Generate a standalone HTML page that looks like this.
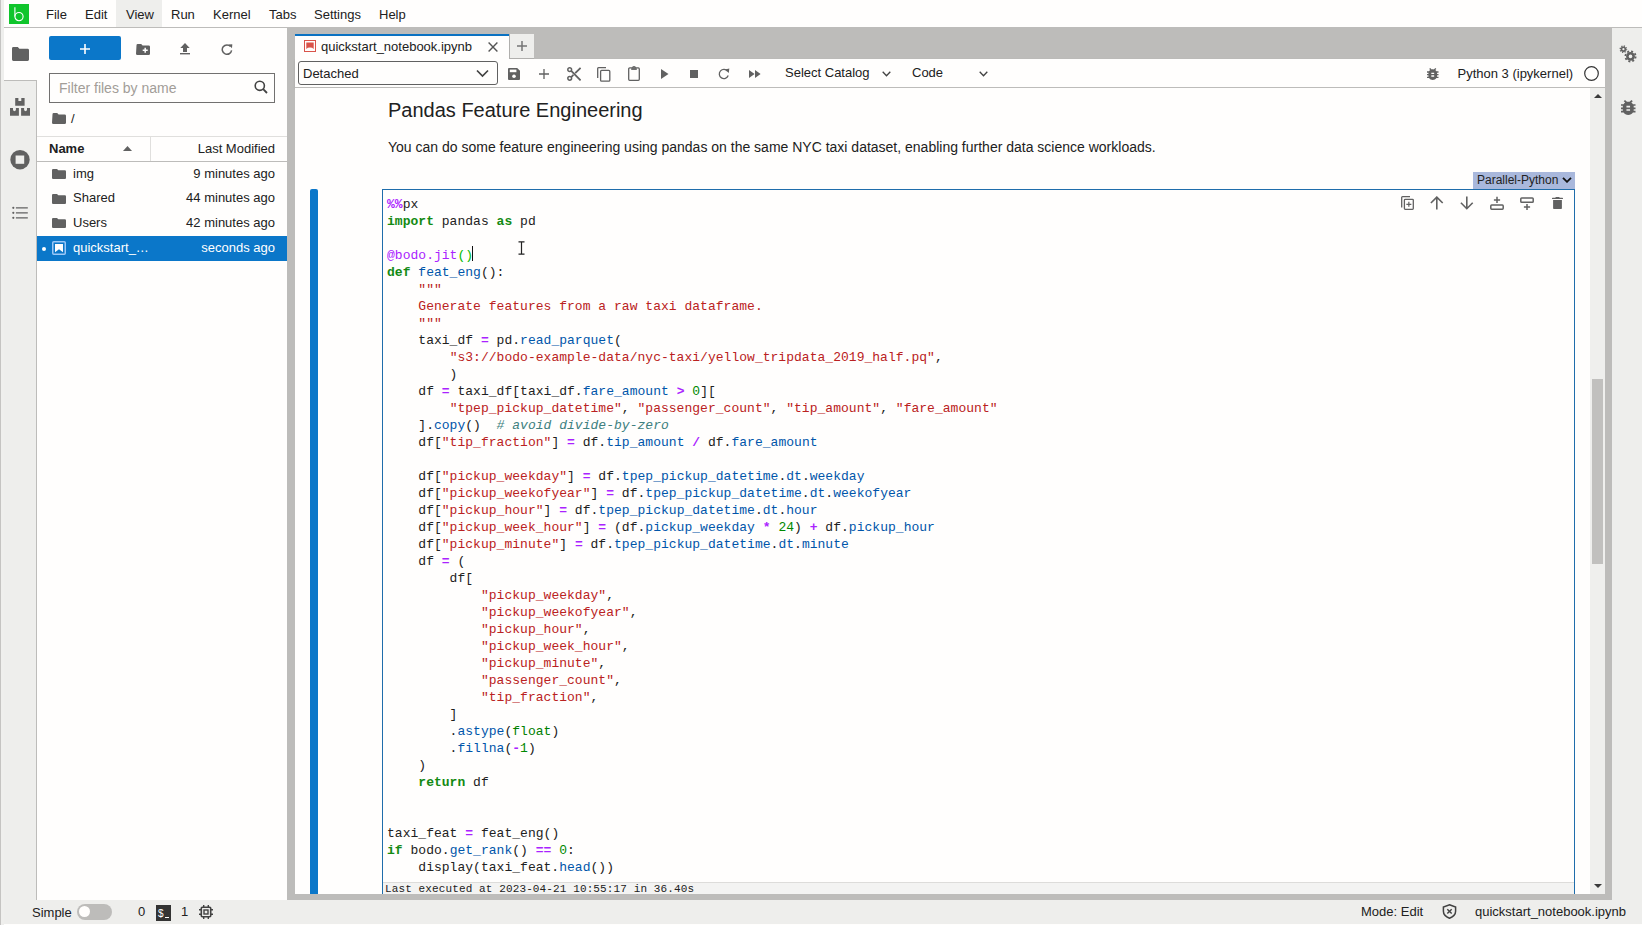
<!DOCTYPE html>
<html><head><meta charset="utf-8">
<style>
*{box-sizing:border-box;margin:0;padding:0}
html,body{width:1642px;height:925px;overflow:hidden;background:#eeeeec;font-family:"Liberation Sans",sans-serif;color:#212121}
.a{position:absolute}
.ui{font-size:13px;line-height:15px;white-space:pre}
svg{display:block}
/* menu */
#menubar{left:4px;top:0;width:1638px;height:28px;background:#fffefd;border-bottom:1px solid #bdbcba}
.mi{position:absolute;top:7px;font-size:13px;line-height:15px;color:#212121}
/* left stripe */
#lstripe{left:0;top:0;width:4px;height:925px;background:#efefed;border-left:1px solid #c5c4c2}
/* left icon bar */
#lbar{left:4px;top:28px;width:33px;height:872px;background:#eeeeec;border-right:1px solid #bdbcba}
#lbar .act{position:absolute;left:0;top:0;width:33px;height:52px;background:#fffefd}
/* file browser */
#fb{left:37px;top:28px;width:250px;height:872px;background:#fffefd}
#split{left:287px;top:28px;width:8px;height:872px;background:#bdbcba}
/* main */
#main{left:295px;top:28px;width:1310px;height:872px;background:#bdbcba}
#rsplit{left:1605px;top:28px;width:7px;height:872px;background:#bdbcba}
#rbar{left:1612px;top:28px;width:30px;height:872px;background:#eeeeec}
#status{left:0;top:900px;width:1642px;height:24px;background:#eeeeec}
#sbot{left:0;top:924px;width:1642px;height:1px;background:#fffefd}
.code{font-family:"Liberation Mono",monospace;font-size:13px;line-height:17px;white-space:pre;color:#212121;letter-spacing:0.026px}
.k{color:#138a13;font-weight:bold}
.s{color:#ba2121}
.o{color:#aa22ff;font-weight:bold}
.p{color:#0055aa}
.n{color:#008800}
.c{color:#408080;font-style:italic}
.m{color:#aa22ff}
.bi{color:#008000}
.g{color:#00bb00}
</style></head><body>
<div id="menubar" class="a">
  <div class="a" style="left:5px;top:4px;width:20px;height:20px;background:#10c52c"></div><svg class="a" style="left:5px;top:4px" width="20" height="20" viewBox="0 0 20 20"><path d="M5.9 3.2V12.5" stroke="#fff" stroke-width="1.1" fill="none"/><ellipse cx="10" cy="12.6" rx="4.1" ry="4.1" stroke="#fff" stroke-width="1.1" fill="none"/></svg>
  <div class="a" style="left:112px;top:0;width:46px;height:27px;background:#eeeeec"></div>
  <span class="mi" style="left:42px">File</span>
  <span class="mi" style="left:81px">Edit</span>
  <span class="mi" style="left:122px">View</span>
  <span class="mi" style="left:167px">Run</span>
  <span class="mi" style="left:209px">Kernel</span>
  <span class="mi" style="left:265px">Tabs</span>
  <span class="mi" style="left:310px">Settings</span>
  <span class="mi" style="left:375px">Help</span>
</div>
<div id="lbar" class="a"><div class="act"></div>
  <div class="a" style="left:0;top:52px;width:33px;height:1px;background:#bdbcba"></div>
  <svg class="a" style="left:7.5px;top:19px" width="17" height="14" viewBox="0 0 17 14"><path d="M0 1.4Q0 0 1.4 0H5.8L7.4 1.8H15.6Q17 1.8 17 3.2V12.6Q17 14 15.6 14H1.4Q0 14 0 12.6Z" fill="#616161"/></svg>
  <svg class="a" style="left:6px;top:70px" width="20" height="18" viewBox="0 0 20 18"><path d="M5.2 0.1H8.4V3.1H11.3V0.1H14.6V7.7H5.2Z" fill="#616161"/><path d="M0 10H3V12.2L4.45 13.3L5.9 12.2V10H8.9V17.8H0Z" fill="#616161"/><path d="M11.1 10H14.1V12.2L15.55 13.3L17 12.2V10H20V17.8H11.1Z" fill="#616161"/></svg>
  <svg class="a" style="left:6px;top:122px" width="20" height="20" viewBox="0 0 20 20"><circle cx="10" cy="9.7" r="9.7" fill="#616161"/><rect x="5.6" y="5.5" width="8.6" height="8.3" fill="#eeeeec"/></svg>
  <svg class="a" style="left:8px;top:178px" width="16" height="13" viewBox="0 0 16 13"><circle cx="1.3" cy="1.8" r="1.1" fill="#616161"/><circle cx="1.3" cy="6.8" r="1.1" fill="#616161"/><circle cx="1.3" cy="11.8" r="1.1" fill="#616161"/><path d="M3.9 1.8H15.8M3.9 6.8H15.8M3.9 11.8H15.8" stroke="#616161" stroke-width="1.3"/></svg>
</div>
<div id="fb" class="a">
  <!-- new launcher button -->
  <div class="a" style="left:12px;top:8px;width:72px;height:24px;background:#0b77c9;border-radius:2px"></div>
  <svg class="a" style="left:42px;top:15px" width="12" height="12" viewBox="0 0 12 12"><path d="M6 1v10M1 6h10" stroke="#fff" stroke-width="1.6"/></svg>
  <!-- new folder -->
  <svg class="a" style="left:99px;top:15.5px" width="14" height="11" viewBox="0 0 14 11"><path d="M0.5 1.2Q0.5 0 1.7 0H5.2L6.6 1.4H12.6Q14 1.4 14 2.7V9.7Q14 11 12.6 11H1.4Q0 11 0 9.7Z" fill="#616161"/><path d="M9.2 3.8v5M6.7 6.3h5" stroke="#fff" stroke-width="1.5"/></svg>
  <!-- upload -->
  <svg class="a" style="left:143px;top:15px" width="10" height="12" viewBox="0 0 10 12"><path d="M5 0L0.3 5H3V9H7V5H9.7Z" fill="#616161"/><rect x="0" y="10" width="10" height="1.4" fill="#616161"/></svg>
  <!-- refresh -->
  <svg class="a" style="left:184px;top:16px" width="12" height="11" viewBox="0 0 12 11"><path d="M9.6 2.6A4.7 4.7 0 1 0 10.6 6.4" fill="none" stroke="#616161" stroke-width="1.5"/><path d="M7.4 0.6L11.3 0.2L11 4.2Z" fill="#616161"/></svg>
  <!-- filter input -->
  <div class="a" style="left:12px;top:45px;width:226px;height:30px;border:1px solid #727170;background:#fffefd"></div>
  <span class="a" style="left:22px;top:52px;font-size:14px;line-height:16px;color:#a29d98">Filter files by name</span>
  <svg class="a" style="left:217px;top:52px" width="14" height="14" viewBox="0 0 14 14"><circle cx="5.8" cy="5.8" r="4.6" fill="none" stroke="#424242" stroke-width="1.6"/><path d="M9.2 9.2L13 13" stroke="#424242" stroke-width="1.8"/></svg>
  <!-- breadcrumb -->
  <svg class="a" style="left:15px;top:85px" width="14" height="11" viewBox="0 0 14 11"><path d="M0.5 1.2Q0.5 0 1.7 0H5.2L6.6 1.4H12.6Q14 1.4 14 2.7V9.7Q14 11 12.6 11H1.4Q0 11 0 9.7Z" fill="#616161"/></svg>
  <span class="a ui" style="left:34px;top:83px">/</span>
  <!-- header -->
  <div class="a" style="left:0;top:108px;width:250px;height:26px;border-top:1px solid #e0dfdd;border-bottom:1px solid #bdbcba"></div>
  <div class="a" style="left:113px;top:109px;width:1px;height:24px;background:#e0dfdd"></div>
  <span class="a ui" style="left:12px;top:113px;font-weight:bold">Name</span>
  <svg class="a" style="left:86px;top:118px" width="9" height="5" viewBox="0 0 9 5"><path d="M0 5L4.5 0L9 5Z" fill="#616161"/></svg>
  <span class="a ui" style="right:12px;top:113px">Last Modified</span>
  <!-- rows -->
  <svg class="a" style="left:15px;top:141px" width="14" height="10" viewBox="0 0 14 10"><path d="M0 1.1Q0 0 1.1 0H5L6.3 1.3H12.9Q14 1.3 14 2.4V8.9Q14 10 12.9 10H1.1Q0 10 0 8.9Z" fill="#616161"/></svg>
<span class="a ui" style="left:36px;top:138px">img</span><span class="a ui" style="right:12px;top:138px">9 minutes ago</span>
<svg class="a" style="left:15px;top:166px" width="14" height="10" viewBox="0 0 14 10"><path d="M0 1.1Q0 0 1.1 0H5L6.3 1.3H12.9Q14 1.3 14 2.4V8.9Q14 10 12.9 10H1.1Q0 10 0 8.9Z" fill="#616161"/></svg>
<span class="a ui" style="left:36px;top:162px">Shared</span><span class="a ui" style="right:12px;top:162px">44 minutes ago</span>
<svg class="a" style="left:15px;top:190px" width="14" height="10" viewBox="0 0 14 10"><path d="M0 1.1Q0 0 1.1 0H5L6.3 1.3H12.9Q14 1.3 14 2.4V8.9Q14 10 12.9 10H1.1Q0 10 0 8.9Z" fill="#616161"/></svg>
<span class="a ui" style="left:36px;top:187px">Users</span><span class="a ui" style="right:12px;top:187px">42 minutes ago</span>
<div class="a" style="left:0;top:208px;width:250px;height:25px;background:#0b77c9"></div>
<div class="a" style="left:5px;top:219px;width:4px;height:4px;border-radius:2px;background:#fff"></div>
<svg class="a" style="left:15px;top:213px" width="14" height="14" viewBox="0 0 14 14"><rect x="0.75" y="0.75" width="12.5" height="12.5" rx="1" fill="none" stroke="#9cc8f7" stroke-width="1.5"/><path d="M3 3H11V11.3L7 8.2L3 11.3Z" fill="#fffefd"/></svg>
<span class="a ui" style="left:36px;top:212px;color:#fff">quickstart_…</span><span class="a ui" style="right:12px;top:212px;color:#fff">seconds ago</span>

</div>
<div id="split" class="a"></div>
<div id="main" class="a"></div>
<!-- tab bar -->
<!-- toolbar -->
<div class="a" style="left:295px;top:59px;width:1310px;height:29px;background:#fffefd;border-bottom:1px solid #bdbcba;box-shadow:0 1px 2px rgba(0,0,0,0.12)"></div>
<div class="a" style="left:295px;top:34px;width:214px;height:25px;background:#fffefd;border-top:2px solid #0b72c2"></div>
<svg class="a" style="left:304px;top:40px" width="12" height="12" viewBox="0 0 12 12"><rect x="0.5" y="0.5" width="11" height="11" fill="#fffefd" stroke="#d9534a" stroke-width="1"/><path d="M2.3 2.4H9.7V8.9Q8.4 7.5 6 7.5Q3.6 7.5 2.3 8.9Z" fill="#d9534a"/></svg>
<span class="a ui" style="left:321px;top:39px">quickstart_notebook.ipynb</span>
<svg class="a" style="left:488px;top:42px" width="10" height="10" viewBox="0 0 10 10"><path d="M0.6 0.6L9.4 9.4M9.4 0.6L0.6 9.4" stroke="#555" stroke-width="1.4"/></svg>
<div class="a" style="left:509px;top:34px;width:25px;height:25px;background:#eeeeec;border-left:1px solid #b0afad;border-bottom:1px solid #b0afad"></div>
<svg class="a" style="left:517px;top:41px" width="10" height="10" viewBox="0 0 10 10"><path d="M5 0V10M0 5H10" stroke="#757575" stroke-width="1.5"/></svg>
<div class="a" style="left:298px;top:61px;width:200px;height:24px;border:1px solid #616161;border-radius:3px"></div>
<span class="a ui" style="left:303px;top:66px">Detached</span>
<svg class="a" style="left:476px;top:69px" width="13" height="9" viewBox="0 0 13 9"><path d="M1 1.5L6.5 7L12 1.5" fill="none" stroke="#424242" stroke-width="1.7"/></svg>
<!-- save -->
<svg class="a" style="left:508px;top:68px" width="12" height="12" viewBox="0 0 12 12"><path d="M0 1Q0 0 1 0H9.2L12 2.8V11Q12 12 11 12H1Q0 12 0 11Z" fill="#616161"/><rect x="1.8" y="1.6" width="6.6" height="2.6" fill="#fffefd"/><circle cx="6" cy="8.2" r="1.8" fill="#fffefd"/></svg>
<svg class="a" style="left:539px;top:69px" width="10" height="10" viewBox="0 0 10 10"><path d="M5 0V10M0 5H10" stroke="#616161" stroke-width="1.3"/></svg>
<!-- scissors -->
<svg class="a" style="left:567px;top:67px" width="14" height="14" viewBox="0 0 14 14"><circle cx="2.7" cy="2.7" r="1.9" fill="none" stroke="#616161" stroke-width="1.5"/><circle cx="2.7" cy="11.3" r="1.9" fill="none" stroke="#616161" stroke-width="1.5"/><path d="M4.2 3.9L13.6 13.4M4.2 10.1L6.4 7.9M8.2 6.1L13.6 0.8" stroke="#616161" stroke-width="1.8" fill="none"/></svg>
<!-- copy -->
<svg class="a" style="left:597px;top:67px" width="14" height="15" viewBox="0 0 14 15"><path d="M0.7 11V1.5Q0.7 0.7 1.5 0.7H9" fill="none" stroke="#616161" stroke-width="1.3"/><rect x="3.6" y="3.4" width="9.2" height="10.8" rx="1" fill="none" stroke="#616161" stroke-width="1.3"/></svg>
<!-- paste -->
<svg class="a" style="left:628px;top:66px" width="12" height="15" viewBox="0 0 12 15"><rect x="0.7" y="1.9" width="10.6" height="12.4" rx="1" fill="none" stroke="#616161" stroke-width="1.3"/><path d="M3.2 2.2H8.8V3.9H3.2Z" fill="#616161"/><path d="M4.6 2.2Q4.6 0.6 6 0.6Q7.4 0.6 7.4 2.2" fill="none" stroke="#616161" stroke-width="1.2"/></svg>
<!-- play -->
<svg class="a" style="left:661px;top:69px" width="8" height="10" viewBox="0 0 8 10"><path d="M0 0L7.5 5L0 10Z" fill="#616161"/></svg>
<!-- stop -->
<div class="a" style="left:690px;top:70px;width:8px;height:8px;background:#616161"></div>
<!-- restart -->
<svg class="a" style="left:718px;top:68px" width="12" height="12" viewBox="0 0 12 12"><path d="M9.6 3.2A4.6 4.6 0 1 0 10.2 7.6" fill="none" stroke="#616161" stroke-width="1.3"/><path d="M7 1.6L11.3 0.6L10.8 5Z" fill="#616161"/></svg>
<!-- ff -->
<svg class="a" style="left:748.5px;top:70px" width="12" height="8" viewBox="0 0 12 8"><path d="M0 0L5.6 4L0 8ZM6 0L11.6 4L6 8Z" fill="#616161"/></svg>
<span class="a ui" style="left:785px;top:65px">Select Catalog</span>
<svg class="a" style="left:882px;top:71px" width="9" height="6" viewBox="0 0 9 6"><path d="M0.7 0.7L4.5 4.7L8.3 0.7" fill="none" stroke="#424242" stroke-width="1.3"/></svg>
<span class="a ui" style="left:912px;top:65px">Code</span>
<svg class="a" style="left:979px;top:71px" width="9" height="6" viewBox="0 0 9 6"><path d="M0.7 0.7L4.5 4.7L8.3 0.7" fill="none" stroke="#424242" stroke-width="1.3"/></svg>
<!-- bug -->
<svg class="a" style="left:1427px;top:68px" width="11.5" height="12" viewBox="4 3 16 18" preserveAspectRatio="none"><path d="M20 8h-2.81c-.45-.78-1.07-1.45-1.82-1.96L17 4.41 15.59 3l-2.17 2.17C12.96 5.06 12.49 5 12 5s-.96.06-1.41.17L8.41 3 7 4.41l1.62 1.63C7.88 6.55 7.26 7.22 6.81 8H4v2h2.09c-.05.33-.09.66-.09 1v1H4v2h2v1c0 .34.04.67.09 1H4v2h2.81c1.04 1.79 2.97 3 5.19 3s4.15-1.210 5.19-3H20v-2h-2.09c.05-.33.09-.66.09-1v-1h2v-2h-2v-1c0-.34-.04-.67-.09-1H20V8zm-6 8h-4v-2h4v2zm0-4h-4v-2h4v2z" fill="#616161"/></svg>
<span class="a ui" style="left:1457.5px;top:66.3px">Python 3 (ipykernel)</span>
<svg class="a" style="left:1583.5px;top:66px" width="15" height="15" viewBox="0 0 15 15"><circle cx="7.5" cy="7.5" r="6.8" fill="none" stroke="#333" stroke-width="1.2"/></svg>
<!-- notebook panel -->
<div class="a" style="left:295px;top:88px;width:1295px;height:806px;background:#fffefd;overflow:hidden">
  <div class="a" style="left:93px;top:10px;font-size:20px;line-height:24px;white-space:pre">Pandas Feature Engineering</div>
  <div class="a" style="left:93px;top:51px;font-size:14px;line-height:16px;white-space:pre">You can do some feature engineering using pandas on the same NYC taxi dataset, enabling further data science workloads.</div>
  <div class="a" style="left:15px;top:101px;width:8px;height:720px;background:#0b77c9;border-radius:2px"></div>
  <div class="a" style="left:1178px;top:84px;width:102px;height:17px;background:#a9b8dc"></div>
  <span class="a" style="left:1182px;top:85px;font-size:12px;line-height:14px;white-space:pre;color:#222">Parallel-Python</span>
  <svg class="a" style="left:1267px;top:89px" width="10" height="6" viewBox="0 0 10 6"><path d="M1 0.8L5 4.8L9 0.8" fill="none" stroke="#111" stroke-width="1.8"/></svg>
  <div class="a" style="left:87px;top:101px;width:1193px;height:720px;border:1px solid #1f6dab;background:#fffefd"></div>
  <div id="code" class="a code" style="left:92px;top:108px"><span class="o">%%</span>px
<span class="k">import</span> pandas <span class="k">as</span> pd

<span class="m">@bodo.jit</span><span class="g">()</span>
<span class="k">def</span> <span class="p">feat_eng</span>():
    <span class="s">"""</span>
<span class="s">    Generate features from a raw taxi dataframe.</span>
<span class="s">    """</span>
    taxi_df <span class="o">=</span> pd.<span class="p">read_parquet</span>(
        <span class="s">"s3://bodo-example-data/nyc-taxi/yellow_tripdata_2019_half.pq"</span>,
        )
    df <span class="o">=</span> taxi_df[taxi_df.<span class="p">fare_amount</span> <span class="o">&gt;</span> <span class="n">0</span>][
        <span class="s">"tpep_pickup_datetime"</span>, <span class="s">"passenger_count"</span>, <span class="s">"tip_amount"</span>, <span class="s">"fare_amount"</span>
    ].<span class="p">copy</span>()  <span class="c"># avoid divide-by-zero</span>
    df[<span class="s">"tip_fraction"</span>] <span class="o">=</span> df.<span class="p">tip_amount</span> <span class="o">/</span> df.<span class="p">fare_amount</span>

    df[<span class="s">"pickup_weekday"</span>] <span class="o">=</span> df.<span class="p">tpep_pickup_datetime</span>.<span class="p">dt</span>.<span class="p">weekday</span>
    df[<span class="s">"pickup_weekofyear"</span>] <span class="o">=</span> df.<span class="p">tpep_pickup_datetime</span>.<span class="p">dt</span>.<span class="p">weekofyear</span>
    df[<span class="s">"pickup_hour"</span>] <span class="o">=</span> df.<span class="p">tpep_pickup_datetime</span>.<span class="p">dt</span>.<span class="p">hour</span>
    df[<span class="s">"pickup_week_hour"</span>] <span class="o">=</span> (df.<span class="p">pickup_weekday</span> <span class="o">*</span> <span class="n">24</span>) <span class="o">+</span> df.<span class="p">pickup_hour</span>
    df[<span class="s">"pickup_minute"</span>] <span class="o">=</span> df.<span class="p">tpep_pickup_datetime</span>.<span class="p">dt</span>.<span class="p">minute</span>
    df <span class="o">=</span> (
        df[
            <span class="s">"pickup_weekday"</span>,
            <span class="s">"pickup_weekofyear"</span>,
            <span class="s">"pickup_hour"</span>,
            <span class="s">"pickup_week_hour"</span>,
            <span class="s">"pickup_minute"</span>,
            <span class="s">"passenger_count"</span>,
            <span class="s">"tip_fraction"</span>,
        ]
        .<span class="p">astype</span>(<span class="bi">float</span>)
        .<span class="p">fillna</span>(<span class="o">-</span><span class="n">1</span>)
    )
    <span class="k">return</span> df


taxi_feat <span class="o">=</span> feat_eng()
<span class="k">if</span> bodo.<span class="p">get_rank</span>() <span class="o">==</span> <span class="n">0</span>:
    display(taxi_feat.<span class="p">head</span>())</div>
  <div class="a" style="left:88px;top:794px;width:1191px;height:20px;background:#f3f3f2;border-top:1px solid #dddcda"></div>
  <span class="a code" style="left:90px;top:795px;font-size:11px;line-height:12px;letter-spacing:0.12px">Last executed at 2023-04-21 10:55:17 in 36.40s</span>
  <div class="a" style="left:177px;top:158px;width:1px;height:15px;background:#111"></div>
  <svg class="a" style="left:223px;top:153px" width="7" height="14" viewBox="0 0 7 14"><path d="M0.5 0.8H6.5M0.5 13.2H6.5M3.5 0.8V13.2" stroke="#222" stroke-width="1.2" fill="none"/></svg>
  <!-- cell toolbar -->
  <svg class="a" style="left:1106px;top:108px" width="13" height="14" viewBox="0 0 13 14"><path d="M0.7 11.5V1.5Q0.7 0.7 1.5 0.7H9" fill="none" stroke="#616161" stroke-width="1.3"/><rect x="3.4" y="3.3" width="8.9" height="10" rx="0.8" fill="none" stroke="#616161" stroke-width="1.3"/><path d="M7.85 5.8V10.8M5.35 8.3H10.35" stroke="#616161" stroke-width="1.2"/></svg>
<svg class="a" style="left:1135px;top:108px" width="14" height="14" viewBox="0 0 14 14"><path d="M6.8 13.6V1.2M0.9 7L6.8 1.1L12.7 7" fill="none" stroke="#616161" stroke-width="1.6"/></svg>
<svg class="a" style="left:1165px;top:108px" width="14" height="14" viewBox="0 0 14 14"><path d="M6.8 0.4V12.8M0.9 6.8L6.8 12.7L12.7 6.8" fill="none" stroke="#616161" stroke-width="1.6"/></svg>
<svg class="a" style="left:1195px;top:108px" width="14" height="14" viewBox="0 0 14 14"><rect x="0.8" y="9" width="12.4" height="4.2" rx="0.9" fill="none" stroke="#616161" stroke-width="1.5"/><path d="M7 0.8V7M3.9 3.9H10.1" stroke="#616161" stroke-width="1.5"/></svg>
<svg class="a" style="left:1225px;top:108px" width="14" height="14" viewBox="0 0 14 14"><rect x="0.8" y="1.9" width="12.4" height="4.4" rx="0.9" fill="none" stroke="#616161" stroke-width="1.5"/><path d="M7 8V14M3.9 11H10.1" stroke="#616161" stroke-width="1.5"/></svg>
<svg class="a" style="left:1257px;top:109px" width="11" height="12" viewBox="0 0 11 12"><path d="M0 1.2Q0 0.8 0.5 0.8H3.2Q3.5 0 4.2 0H6.8Q7.5 0 7.8 0.8H10.5Q11 0.8 11 1.2V2H0Z" fill="#616161"/><path d="M1.1 3H9.9V11.2Q9.9 11.9 9.2 11.9H1.8Q1.1 11.9 1.1 11.2Z" fill="#616161"/></svg>
</div>
<!-- scrollbar -->
<div class="a" style="left:1590px;top:88px;width:15px;height:806px;background:#efefed"></div>
<svg class="a" style="left:1594px;top:94px" width="8" height="4" viewBox="0 0 8 4"><path d="M0 4L4 0L8 4Z" fill="#3a3a3a"/></svg>
<div class="a" style="left:1592px;top:379px;width:11px;height:185px;background:#c1c0be"></div>
<svg class="a" style="left:1594px;top:884px" width="8" height="4" viewBox="0 0 8 4"><path d="M0 0L4 4L8 0Z" fill="#3a3a3a"/></svg>

<div id="rsplit" class="a"></div>
<div id="rbar" class="a"></div>
<svg class="a" style="left:1618px;top:44px" width="20" height="20" viewBox="0 0 20 20"><g fill="#616161"><circle cx="12.5" cy="12.4" r="4.4"/><circle cx="5.4" cy="5.2" r="2.7"/></g><circle cx="12.5" cy="12.4" r="5.1" fill="none" stroke="#616161" stroke-width="1.8" stroke-dasharray="2 2.005"/><circle cx="5.4" cy="5.2" r="3.2" fill="none" stroke="#616161" stroke-width="1.3" stroke-dasharray="1.2 1.313"/><circle cx="12.5" cy="12.4" r="1.8" fill="#eeeeec"/><circle cx="5.4" cy="5.2" r="1.1" fill="#eeeeec"/></svg>
<svg class="a" style="left:1621px;top:100px" width="14.5" height="15" viewBox="4 3 16 18" preserveAspectRatio="none"><path d="M20 8h-2.81c-.45-.78-1.07-1.45-1.82-1.96L17 4.41 15.59 3l-2.17 2.17C12.96 5.06 12.49 5 12 5s-.96.06-1.41.17L8.41 3 7 4.41l1.62 1.63C7.88 6.55 7.26 7.22 6.81 8H4v2h2.09c-.05.33-.09.66-.09 1v1H4v2h2v1c0 .34.04.67.09 1H4v2h2.81c1.04 1.79 2.97 3 5.19 3s4.15-1.210 5.19-3H20v-2h-2.09c.05-.33.09-.66.09-1v-1h2v-2h-2v-1c0-.34-.04-.67-.09-1H20V8zm-6 8h-4v-2h4v2zm0-4h-4v-2h4v2z" fill="#616161"/></svg>
<div id="sbot" class="a"></div>
<div id="status" class="a">
  <span class="a ui" style="left:32px;top:5px">Simple</span>
  <div class="a" style="left:77px;top:4px;width:35px;height:16px;border-radius:8px;background:#bdbcba"></div>
  <div class="a" style="left:79px;top:6px;width:11px;height:11px;border-radius:6px;background:#fffefd"></div>
  <span class="a ui" style="left:138px;top:4px">0</span>
  <div class="a" style="left:156px;top:5px;width:15px;height:16px;background:#333"></div>
  <span class="a" style="left:158px;top:8px;font-size:10px;line-height:12px;color:#fff;font-family:'Liberation Sans',sans-serif">$</span><div class="a" style="left:165px;top:17px;width:4px;height:1px;background:#fff"></div>
  <span class="a ui" style="left:181px;top:4px">1</span>
  <svg class="a" style="left:199px;top:5px" width="14" height="14" viewBox="0 0 14 14"><rect x="2.3" y="2.3" width="9.4" height="9.4" rx="1" fill="none" stroke="#424242" stroke-width="1.6"/><rect x="5" y="5" width="4" height="4" fill="none" stroke="#424242" stroke-width="1.4"/><path d="M4.7 0V2.3M9.3 0V2.3M4.7 11.7V14M9.3 11.7V14M0 4.7H2.3M0 9.3H2.3M11.7 4.7H14M11.7 9.3H14" stroke="#424242" stroke-width="1.4"/></svg>
  <span class="a ui" style="left:1361px;top:4px">Mode: Edit</span>
  <svg class="a" style="left:1442px;top:4px" width="15" height="15" viewBox="0 0 15 15"><path d="M7.5 0.8L13.6 3V7.2Q13.6 11.8 7.5 14.2Q1.4 11.8 1.4 7.2V3Z" fill="none" stroke="#424242" stroke-width="1.5"/><path d="M5.3 5.2L9.7 9.6M9.7 5.2L5.3 9.6" stroke="#424242" stroke-width="1.4"/></svg>
  <span class="a ui" style="left:1475px;top:4px">quickstart_notebook.ipynb</span>
</div>
<div id="lstripe" class="a"></div>
</body></html>
